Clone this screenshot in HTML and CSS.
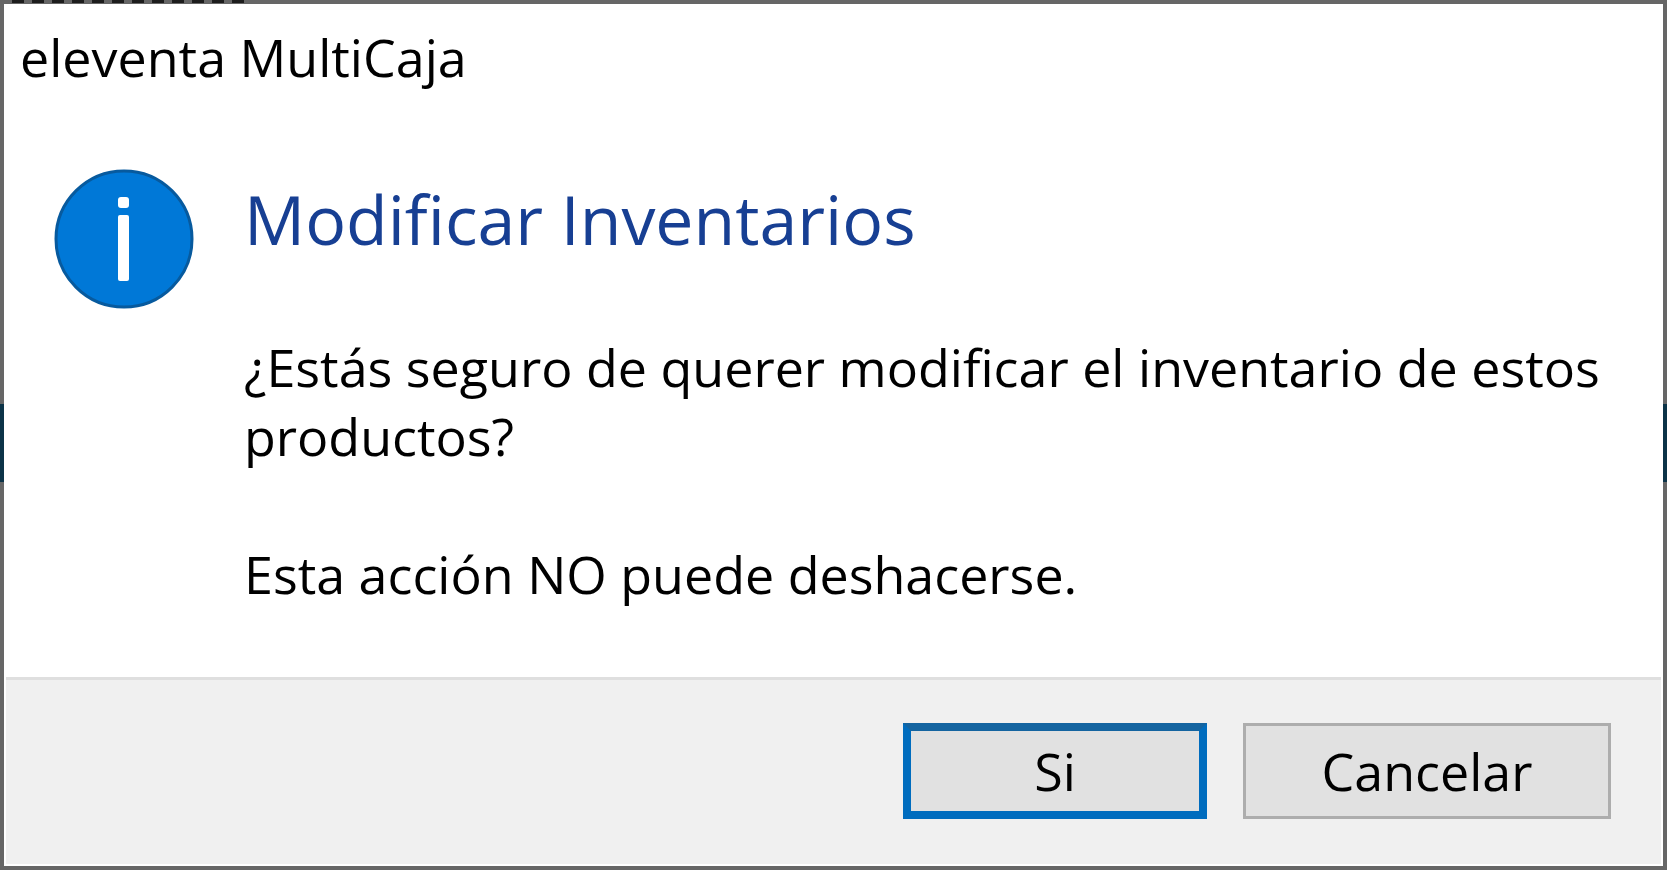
FILE: index.html
```html
<!DOCTYPE html>
<html lang="es">
<head>
<meta charset="utf-8">
<title>eleventa MultiCaja</title>
<link rel="stylesheet" href="styles.css">
</head>
<body>
<main class="dialog" role="dialog" aria-labelledby="heading">
  <header class="titlebar">eleventa MultiCaja</header>
  <section class="content">
    <svg class="icon" viewBox="0 0 140 140" aria-hidden="true">
      <circle cx="70" cy="70" r="68" fill="#0078d7" stroke="#075a9e" stroke-width="3"/>
      <rect x="64" y="46" width="11" height="66" rx="2" fill="#fff"/>
      <rect x="64" y="28" width="11" height="11" rx="3" fill="#fff"/>
    </svg>
    <div class="message">
      <h1 class="heading" id="heading">Modificar Inventarios</h1>
      <p class="text">¿Estás seguro de querer modificar el inventario de estos productos?</p>
      <p class="text">Esta acción NO puede deshacerse.</p>
    </div>
  </section>
  <footer class="actions">
    <button class="button button-default" type="button">Si</button>
    <button class="button button-cancel" type="button">Cancelar</button>
  </footer>
</main>
</body>
</html>
```
FILE: styles.css
```css
* {
  box-sizing: border-box;
}

/* The darkened backdrop shows as a thin frame round the dialog. */
body {
  display: flex;
  min-height: 100vh;
  margin: 0;
  padding: 4px;
  background:
    linear-gradient(#0c3348, #0c3348) 0 51% / 100% 78px no-repeat,
    repeating-linear-gradient(90deg, #1c1c1c 0 12px, #666 12px 20px) 12px 0 / 240px 3px no-repeat,
    #666;
  color: #000;
  font-family: "Open Sans", "Noto Sans", sans-serif;
  font-size: 52px;
  font-variant-ligatures: none;
}

.dialog {
  display: flex;
  flex: 1;
  flex-direction: column;
  padding: 2px;
  background: #fff;
}

.titlebar {
  padding: 17px 14px 18px;
  line-height: 68px;
}

.content {
  display: flex;
  flex: 1;
  align-items: flex-start;
  gap: 50px;
  padding: 60px 48px 48px;
}

.icon {
  flex: none;
  width: 140px;
  height: 140px;
}

.message {
  flex: 1;
}

.heading {
  margin: 0 0 63px;
  color: #173f93;
  font-size: 68px;
  font-weight: 400;
  line-height: 100px;
}

.text {
  margin: 0 0 69px;
  line-height: 69px;
}

.text:last-child {
  margin-bottom: 0;
}

.actions {
  display: flex;
  justify-content: flex-end;
  gap: 36px;
  padding: 43px 50px 45px;
  border-top: 3px solid #dfdfdf;
  background: #f0f0f0;
}

.button {
  height: 96px;
  padding: 0;
  border: 3px solid #adadad;
  background: #e1e1e1;
  color: #000;
  font: inherit;
  line-height: 68px;
}

.button-default {
  width: 304px;
  border: 8px solid #006cbe;
  border-top-color: #1464a0;
}

.button-cancel {
  width: 368px;
}
```
